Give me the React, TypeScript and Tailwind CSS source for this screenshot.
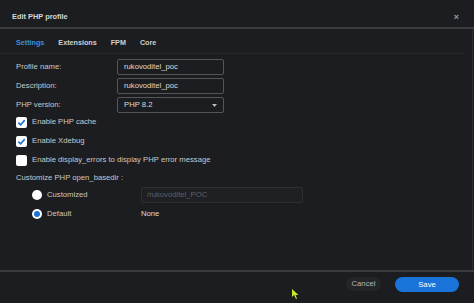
import React from "react";

function Check() {
  return (
    <span className="flex h-[11px] w-[11px] items-center justify-center rounded-[2px] bg-white">
      <svg width="9" height="9" viewBox="0 0 10 10">
        <path d="M1.5 5.2 L4 7.6 L8.6 2.4" fill="none" stroke="#1a73d9" strokeWidth="1.8" />
      </svg>
    </span>
  );
}

export default function App() {
  return (
    <div
      className="relative flex h-[303px] w-[474px] flex-col overflow-hidden bg-[#1c1d20] text-[7.7px] leading-[12px] text-[#c9c9c9]"
      style={{ fontFamily: '"Liberation Sans", Arial, sans-serif' }}
    >
      <div className="flex h-[29px] items-center justify-between border-b-2 border-[#3b3c3f] pl-[12px] pr-[15px] pt-[6px]">
        <span className="text-[7.4px] font-bold text-[#d6d6d6]">Edit PHP profile</span>
        <span className="text-[9px] font-bold text-[#9a9a9a]">×</span>
      </div>
      <div className="mr-[10px] flex h-[25px] items-center gap-[14px] border-b border-[#26272a] pl-[16px] pt-[4px] text-[7.2px] font-bold">
        <span className="text-[#3d8fd6]">Settings</span>
        <span className="text-[#d0d0d0]">Extensions</span>
        <span className="text-[#d0d0d0]">FPM</span>
        <span className="text-[#d0d0d0]">Core</span>
      </div>
      <div className="flex flex-1 flex-col pl-[16px] pt-[5px]">
        <div className="grid grid-cols-[101px_107px] gap-y-[3px]">
          <span className="self-center">Profile name:</span>
          <div className="flex h-[16px] items-center rounded-[2px] border border-[#55565a] px-[6px] text-[#dcdcdc]">rukovoditel_poc</div>
          <span className="self-center">Description:</span>
          <div className="flex h-[16px] items-center rounded-[2px] border border-[#55565a] px-[6px] text-[#dcdcdc]">rukovoditel_poc</div>
          <span className="self-center">PHP version:</span>
          <div className="flex h-[16px] items-center justify-between rounded-[2px] border border-[#55565a] px-[6px] text-[#dcdcdc]">
            <span>PHP 8.2</span>
            <svg width="5" height="3" viewBox="0 0 5 3"><path d="M0 0 H5 L2.5 3 Z" fill="#bbbbbb" /></svg>
          </div>
        </div>
        <div className="mt-[3px] flex flex-col gap-[7px]">
          <div className="flex h-[12px] items-center gap-[5px]"><Check /><span>Enable PHP cache</span></div>
          <div className="flex h-[12px] items-center gap-[5px]"><Check /><span>Enable Xdebug</span></div>
          <div className="flex h-[12px] items-center gap-[5px]">
            <span className="h-[11px] w-[11px] rounded-[2px] bg-white" />
            <span>Enable display_errors to display PHP error message</span>
          </div>
        </div>
        <div className="mt-[6px]">Customize PHP open_basedir :</div>
        <div className="mt-[3px] grid grid-cols-[109px_162px] items-center gap-y-[3px] pl-[16px]">
          <div className="flex items-center gap-[5px]">
            <span className="h-[10px] w-[10px] rounded-full bg-white" />
            <span>Customized</span>
          </div>
          <div className="flex h-[16px] items-center rounded-[2px] border border-[#2e2f33] bg-[#1f2023] px-[5px] text-[#5e5f63]">/rukovoditel_POC</div>
          <div className="flex items-center gap-[5px]">
            <span className="flex h-[10px] w-[10px] items-center justify-center rounded-full bg-white">
              <span className="h-[6px] w-[6px] rounded-full bg-[#1a73d9]" />
            </span>
            <span>Default</span>
          </div>
          <div className="flex h-[16px] items-center text-[#dcdcdc]">None</div>
        </div>
      </div>
      <div className="flex h-[33px] items-start justify-end gap-[14px] border-t-2 border-[#3b3c3f] pr-[15px] pt-[5px]">
        <div className="flex h-[14px] w-[35px] items-center justify-center rounded-full bg-[#242529] text-[#b5b5b5]">Cancel</div>
        <div className="flex h-[15px] w-[64px] items-center justify-center rounded-full bg-[#1a73d9] text-white">Save</div>
      </div>
      <div className="absolute right-[1px] top-[29px] h-[241px] w-[1px] bg-[#2c2d30]" />
      <svg className="absolute left-[292px] top-[289px]" width="8" height="10" viewBox="0 0 8 10">
        <path d="M0 0 L0 8 L2 6 L4 10 L5 9.5 L3.5 6 L6.5 6 Z" fill="#c6e82a" />
      </svg>
    </div>
  );
}
